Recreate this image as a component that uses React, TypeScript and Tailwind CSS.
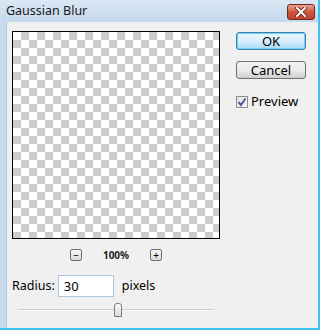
import React from 'react'

const font = { fontFamily: '"Noto Sans", "Open Sans", sans-serif' }

function Checker() {
  return (
    <div
      className="w-[208px] h-[208px] border border-black"
      style={{
        backgroundColor: '#ffffff',
        backgroundImage:
          'linear-gradient(45deg, #cccccc 25%, transparent 25%, transparent 75%, #cccccc 75%), linear-gradient(45deg, #cccccc 25%, transparent 25%, transparent 75%, #cccccc 75%)',
        backgroundSize: '16px 16px',
        backgroundPosition: '0 0, 8px 8px',
      }}
    />
  )
}

function SmallBtn({ label }: { label: string }) {
  return (
    <div className="w-[12px] h-[12px] rounded-[2px] border border-[#707070] bg-gradient-to-b from-[#f6f6f6] to-[#dcdcdc] flex items-center justify-center text-[10px] leading-none text-black">
      {label}
    </div>
  )
}

export default function App() {
  return (
    <div className="w-[320px] h-[330px] bg-[#c8daee] flex flex-col text-black border-b-2 border-r-2 border-[#3cc2ee]" style={font}>
      {/* title bar */}
      <div className="h-[22px] flex items-center justify-between pl-[6px] pr-[3px] bg-gradient-to-b from-[#dbe7f4] to-[#c5d8ed]">
        <span className="text-[12.5px] text-[#1a1a1a] leading-none">Gaussian Blur</span>
        <div className="w-[28px] h-[16px] mt-[1px] rounded-[3px] border border-[#6d2a25] bg-gradient-to-b from-[#e8a493] via-[#d0553d] to-[#c2412a] flex items-center justify-center">
          <svg width="12" height="10" viewBox="0 0 12 10">
            <path d="M2 1 L10 9 M10 1 L2 9" stroke="#5b1d14" strokeWidth="3.6" strokeLinecap="square" />
            <path d="M2 1 L10 9 M10 1 L2 9" stroke="#ffffff" strokeWidth="2" strokeLinecap="square" />
          </svg>
        </div>
      </div>

      {/* body */}
      <div className="flex-1 ml-[6px] bg-[#f0f0f0] border-l border-[#b9cade] flex">
        <div className="flex flex-col pl-[5px] pt-[9px] w-[228px]">
          <Checker />
          <div className="flex items-center mt-[10px] ml-[58px]">
            <SmallBtn label="−" />
            <span className="text-[10px] font-bold text-[#222] w-[68px] text-center leading-none">100%</span>
            <SmallBtn label="+" />
          </div>
          <div className="flex items-center mt-[14px]">
            <span className="text-[12.5px] leading-none">Radius:</span>
            <div className="ml-[3px] w-[56px] h-[22px] border border-[#a9c6e2] bg-white flex items-center pl-[5px] text-[13px] leading-none">
              30
            </div>
            <span className="ml-[8px] text-[12.5px] leading-none">pixels</span>
          </div>
          <div className="relative mt-[6px] ml-[6px] w-[196px] h-[14px] flex items-center">
            <div className="w-full h-[2px] bg-[#cfcfcf] border-b border-[#f8f8f8]" />
            <div className="absolute left-[96px] top-[0px] w-[8px] h-[14px] border border-[#7c7c7c] bg-gradient-to-b from-[#fafafa] to-[#dadada] rounded-t-[3px]" />
          </div>
        </div>

        <div className="flex flex-col pt-[10px] ml-[1px]">
          <div className="w-[70px] h-[18px] rounded-[3px] border border-[#3c7fb1] bg-gradient-to-b from-[#eaf6fd] via-[#d9f0fc] to-[#a7d9f5] shadow-[inset_0_0_0_1px_#6fd0f5] flex items-center justify-center text-[13px] leading-none">
            OK
          </div>
          <div className="mt-[11px] w-[70px] h-[18px] rounded-[3px] border border-[#707070] bg-gradient-to-b from-[#f2f2f2] via-[#ebebeb] to-[#cfcfcf] flex items-center justify-center text-[13px] leading-none">
            Cancel
          </div>
          <div className="mt-[16px] flex items-center">
            <div className="w-[12px] h-[12px] border border-[#8e8f8f] bg-gradient-to-br from-[#e0e0e0] to-[#fafafa] flex items-center justify-center">
              <svg width="10" height="10" viewBox="0 0 10 10">
                <path d="M1.5 5 L4 8 L8.5 1.5" fill="none" stroke="#4a5f97" strokeWidth="2" />
              </svg>
            </div>
            <span className="ml-[3px] text-[13px] leading-none">Preview</span>
          </div>
        </div>
      </div>
    </div>
  )
}
